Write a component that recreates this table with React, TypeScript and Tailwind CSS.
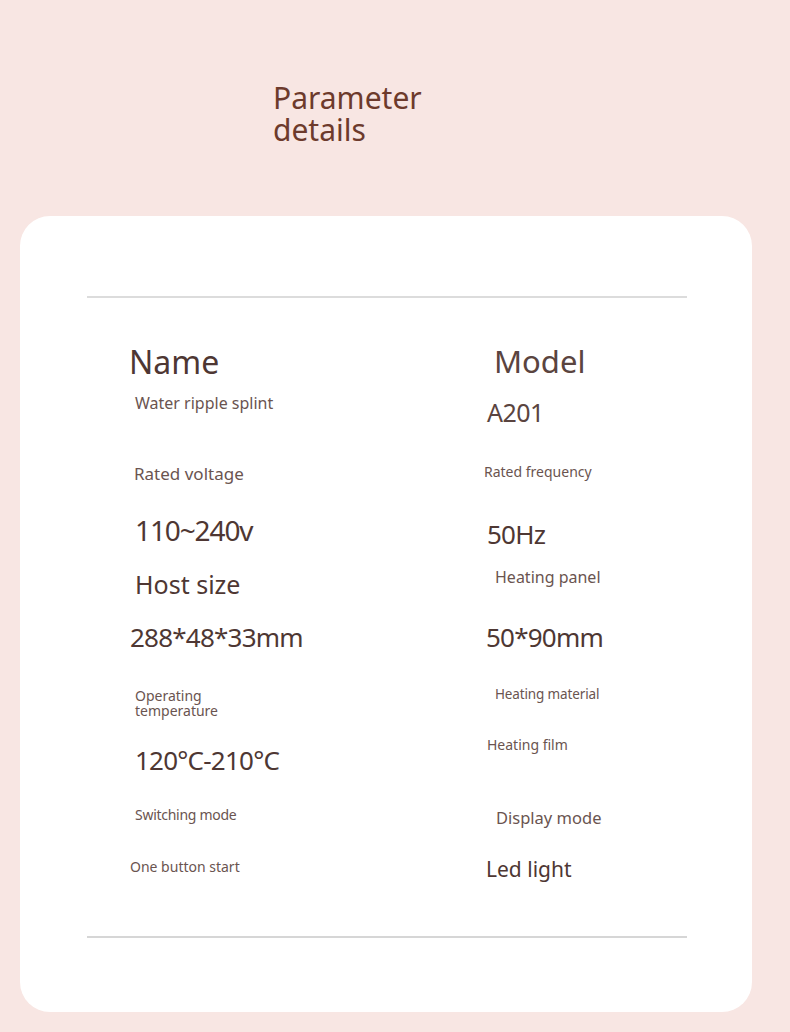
import React from "react";

type Item = {
  text: string;
  className: string;
};

// left column, starts at x=129
const leftItems: Item[] = [
  { text: "Name", className: "mt-0 ml-0 text-[32px] leading-none text-[#4e3733]" },
  { text: "Water ripple splint", className: "mt-[17px] ml-[6px] text-[16px] leading-none text-[#6a5450]" },
  { text: "Rated voltage", className: "mt-[54px] ml-[5px] text-[17px] leading-none text-[#6a5450]" },
  { text: "110~240v", className: "mt-[34px] ml-[6px] text-[28px] leading-none tracking-[-0.04em] text-[#4e3733]" },
  { text: "Host size", className: "mt-[28px] ml-[6px] text-[25px] leading-none text-[#4e3733]" },
  { text: "288*48*33mm", className: "mt-[27px] ml-[1px] text-[26px] leading-none tracking-[-0.03em] text-[#4e3733]" },
];

const leftTail: Item[] = [
  { text: "120°C-210°C", className: "mt-[29px] ml-[6px] text-[26px] leading-none tracking-[-0.03em] text-[#4e3733]" },
  { text: "Switching mode", className: "mt-[35px] ml-[6px] text-[14px] leading-none tracking-[-0.02em] text-[#6a5450]" },
  { text: "One button start", className: "mt-[38px] ml-[1px] text-[14px] leading-none text-[#6a5450]" },
];

// right column, starts at x=483
const rightItems: Item[] = [
  { text: "Model", className: "mt-0 ml-[11px] text-[31px] leading-none text-[#5a4440]" },
  { text: "A201", className: "mt-[23px] ml-[4px] text-[25px] leading-none tracking-[-0.02em] text-[#5a4440]" },
  { text: "Rated frequency", className: "mt-[40px] ml-[1px] text-[14px] leading-none text-[#6a5450]" },
  { text: "50Hz", className: "mt-[42px] ml-[4px] text-[26px] leading-none tracking-[-0.03em] text-[#4e3733]" },
  { text: "Heating panel", className: "mt-[22px] ml-[12px] text-[16px] leading-none text-[#6a5450]" },
  { text: "50*90mm", className: "mt-[39px] ml-[3px] text-[26px] leading-none tracking-[-0.03em] text-[#4e3733]" },
  { text: "Heating material", className: "mt-[38px] ml-[12px] text-[13.5px] leading-none tracking-[-0.01em] text-[#6a5450]" },
  { text: "Heating film", className: "mt-[36px] ml-[4px] text-[14px] leading-none text-[#6a5450]" },
  { text: "Display mode", className: "mt-[58px] ml-[13px] text-[16.5px] leading-none text-[#6a5450]" },
  { text: "Led light", className: "mt-[33px] ml-[3px] text-[21px] leading-none text-[#4e3733]" },
];

const ParameterDetails: React.FC = () => {
  return (
    <div
      className="min-h-screen bg-[#f8e6e3] pt-[83px] pb-[19px]"
      style={{ fontFamily: '"Noto Sans", "Open Sans", sans-serif' }}
    >
      <h1 className="pl-[273px] text-[30px] leading-none font-normal text-[#6d3a2c]">
        <div>Parameter</div>
        <div className="mt-[2px]">details</div>
      </h1>

      {/* card */}
      <div className="mt-[71px] ml-[20px] w-[732px] rounded-[30px] bg-white pt-[80px] pb-[74px]">
        <div className="ml-[67px] mr-[65px] h-[2px] bg-[#dcdcdc]" />

        <div className="mt-[48px] pl-[109px] grid grid-cols-[354px_1fr]">
          <div className="flex flex-col items-start">
            {leftItems.map((item) => (
              <div key={item.text} className={item.className}>
                {item.text}
              </div>
            ))}
            <div className="mt-[39px] ml-[6px] text-[14px] leading-none text-[#6a5450]">
              <div>Operating</div>
              <div className="mt-[1px]">temperature</div>
            </div>
            {leftTail.map((item) => (
              <div key={item.text} className={item.className}>
                {item.text}
              </div>
            ))}
          </div>

          <div className="flex flex-col items-start">
            {rightItems.map((item) => (
              <div key={item.text} className={item.className}>
                {item.text}
              </div>
            ))}
          </div>
        </div>

        <div className="mt-[56px] ml-[67px] mr-[65px] h-[2px] bg-[#d6d6d6]" />
      </div>
    </div>
  );
};

export default ParameterDetails;
